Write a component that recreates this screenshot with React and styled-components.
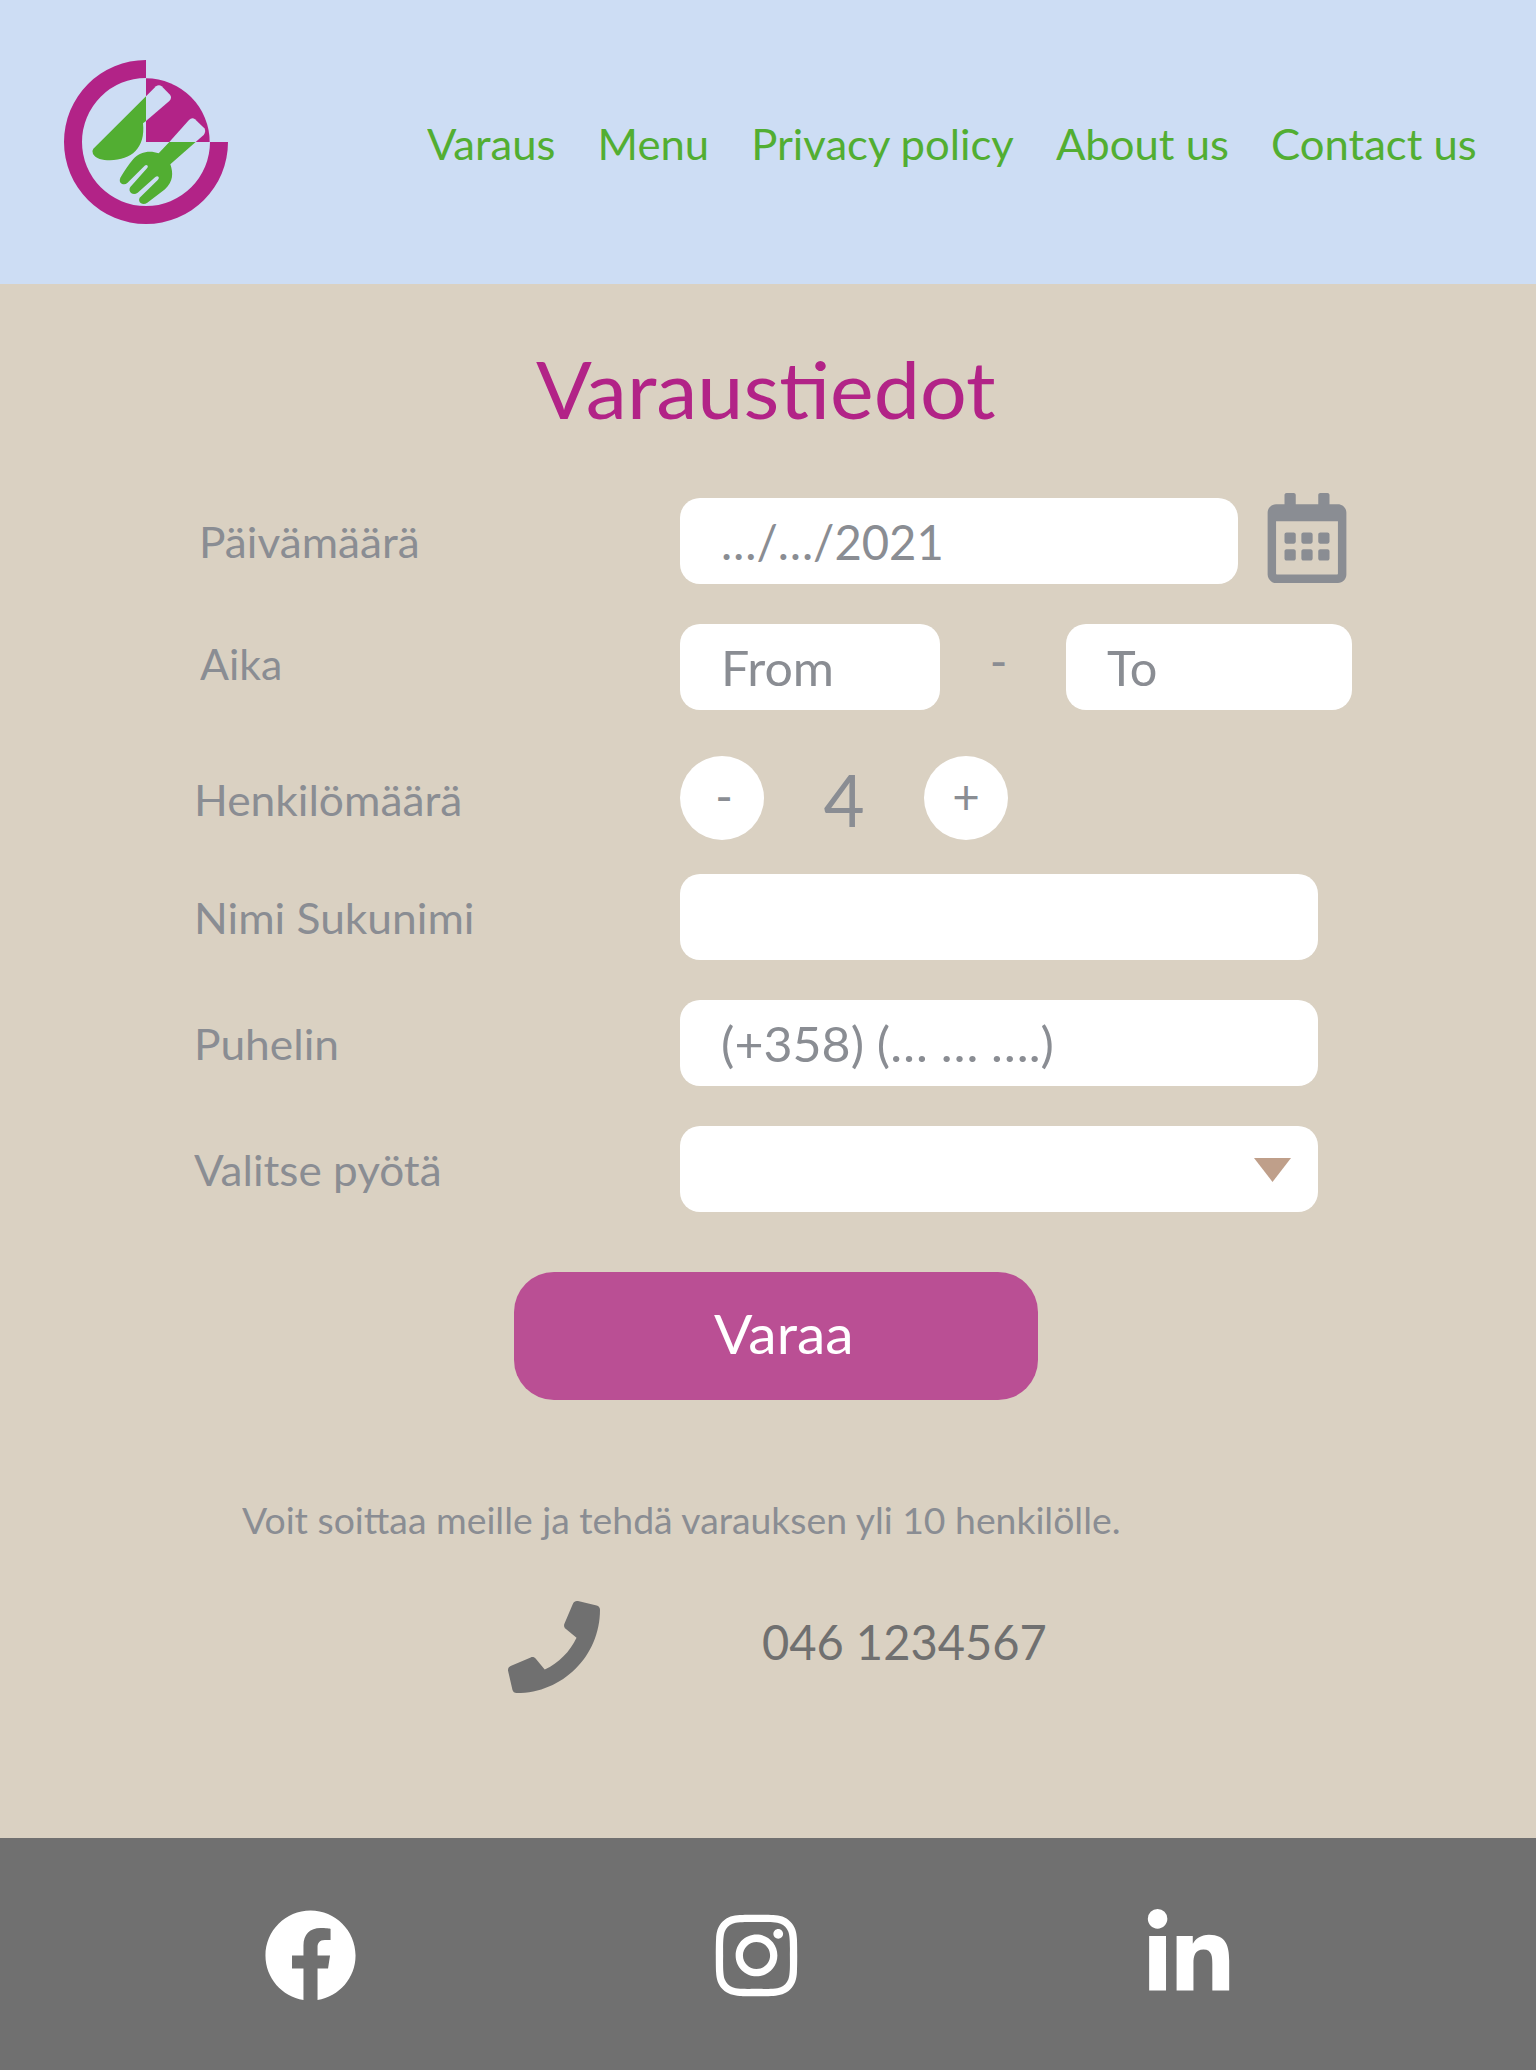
import React from "react";
import styled, { createGlobalStyle } from "styled-components";
import { FaRegCalendarAlt, FaPhone, FaFacebook, FaInstagram, FaLinkedinIn } from "react-icons/fa";

const c = {
  sky: "#cdddf4",
  sand: "#dad1c2",
  green: "#52ae32",
  magenta: "#b22387",
  button: "#ba4f94",
  grey: "#8a8d93",
  dark: "#707070",
  arrow: "#bf9f8a",
};

const GlobalStyle = createGlobalStyle`
  * { box-sizing: border-box; }
  body { margin: 0; background: ${c.sand}; font-family: Lato, "Open Sans", sans-serif; }
  svg { display: block; flex: none; }
`;

const Page = styled.div`
  width: 1536px;
  height: 2070px;
  display: flex;
  flex-direction: column;
  background: ${c.sand};
`;

/* Slightly widened lettering, anchored at its starting edge. */
const Wide = styled.span`
  display: inline-block;
  white-space: nowrap;
  transform: scaleX(${(p) => p.$by || 1.045});
  transform-origin: ${(p) => (p.$center ? "center" : "left")};
`;

const Header = styled.header`
  height: 284px;
  display: flex;
  align-items: center;
  background: ${c.sky};
  padding-left: 64px;
`;

const Nav = styled.nav`
  display: flex;
  gap: 40.5px;
  margin-left: 199px;
  padding-top: 4px;
  transform: scaleX(1.039);
  transform-origin: left;
`;

const NavLink = styled.a`
  color: ${c.green};
  font-size: 42px;
  line-height: 50px;
  white-space: nowrap;
`;

const Main = styled.main`
  flex: 1;
  display: flex;
  flex-direction: column;
`;

const Title = styled.h1`
  margin: 57px 0 61px 536px;
  color: ${c.magenta};
  font-size: 79.5px;
  font-weight: 400;
  line-height: 96px;
`;

const Form = styled.form`
  display: flex;
  flex-direction: column;
  gap: 40px;
`;

const Row = styled.div`
  display: flex;
  align-items: center;
  height: 86px;
`;

const CounterRow = styled(Row)`
  height: 84px;
  margin: 6px 0 -6px;
`;

const Label = styled.label`
  width: 680px;
  padding: ${(p) => p.$pad || "1px 0 0"};
  padding-left: ${(p) => p.$indent || 194}px;
  color: ${c.grey};
  font-size: 42px;
  line-height: 50px;
`;

const Field = styled.div`
  display: flex;
  align-items: center;
  justify-content: ${(p) => (p.$select ? "flex-end" : "flex-start")};
  width: ${(p) => p.$width}px;
  height: 86px;
  padding: 1px 27px 0 41px;
  border-radius: 20px;
  background: #fff;
  color: ${c.grey};
  font-size: 47.5px;
  line-height: 56px;
`;

const CalendarIcon = styled(FaRegCalendarAlt)`
  margin: -6px 0 0 24px;
  color: ${c.grey};
`;

const Dash = styled.span`
  width: 126px;
  text-align: center;
  padding: 0 9px 12px 0;
  color: ${c.grey};
  font-size: 47.5px;
  line-height: 56px;
`;

const Round = styled.button`
  width: 84px;
  height: 84px;
  padding: 0 0 4px ${(p) => p.$nudge || 0}px;
  border: 0;
  border-radius: 50%;
  background: #fff;
  color: ${c.grey};
  font: 400 47.5px/56px Lato, sans-serif;
`;

const Count = styled.span`
  width: 160px;
  padding-top: 3px;
  text-align: center;
  color: ${c.grey};
  font-size: 71px;
  line-height: 84px;
`;

const Submit = styled.button`
  width: 524px;
  height: 128px;
  margin: 60px 0 0 514px;
  padding: 0 0 6px 16px;
  border: 0;
  border-radius: 40px;
  background: ${c.button};
  color: #fff;
  font: 400 54.5px/64px Lato, sans-serif;
`;

const Note = styled.p`
  margin: 98px 0 0 242px;
  color: ${c.grey};
  font-size: 36px;
  line-height: 44px;
`;

const Call = styled.div`
  display: flex;
  align-items: center;
  gap: 162px;
  margin: 59px 0 0 508px;
  color: ${c.dark};
  font-size: 47.5px;
  line-height: 56px;
`;

const Number = styled.span`
  padding-bottom: 10px;
`;

const Footer = styled.footer`
  display: flex;
  align-items: flex-start;
  height: 232px;
  padding: 71px 0 0 264px;
  background: ${c.dark};
  color: #fff;
`;

const Social = styled.a`
  width: ${(p) => p.$width}px;
`;

function Logo() {
  return (
    <svg width="164" height="164" viewBox="42 45 492 492">
      <path fill={c.magenta} d="M288 45A246 246 0 1 0 534 291H480A192 192 0 1 1 288 99Z" />
      <path fill={c.magenta} d="M288 100A191 191 0 0 1 479 291H288Z" />
      <path fill={c.green} d="M288 154L130 311Q124 319 129 327C137 341 157 346 180 346C244 345 287 310 279 235L288 228Z" />
      <path fill={c.sky} d="M288 154L318 124Q327 117 335 124L360 149Q367 158 358 168L288 228Z" />
      <path fill={c.sky} d="M358 291L417 225Q426 216 435 223L463 250Q469 259 461 270L437 291Z" />
      <path fill={c.green} d="M358 291L326 325C300 315 270 320 250 342C235 360 222 380 211 398Q206 410 215 416Q224 421 232 414L284 362Q289 358 293 362Q295 366 291 370L241 426Q235 436 243 444Q253 451 263 443L316 396Q322 391 326 396Q328 400 324 404L269 458Q264 468 273 475Q282 480 292 473L345 433C370 410 370 385 361 358L437 291Z" />
    </svg>
  );
}

export default function App() {
  return (
    <Page>
      <GlobalStyle />
      <Header>
        <Logo />
        <Nav>
          <NavLink>Varaus</NavLink>
          <NavLink>Menu</NavLink>
          <NavLink>Privacy policy</NavLink>
          <NavLink>About us</NavLink>
          <NavLink>Contact us</NavLink>
        </Nav>
      </Header>
      <Main>
        <Title><Wide $by={1.039}>Varaustiedot</Wide></Title>
        <Form>
          <Row>
            <Label $indent={199}><Wide $by={1.052}>Päivämäärä</Wide></Label>
            <Field $width={558}><Wide $by={0.993}>…/…/2021</Wide></Field>
            <CalendarIcon size={90} />
          </Row>
          <Row>
            <Label $indent={200} $pad="0 0 6px"><Wide $by={1.02}>Aika</Wide></Label>
            <Field $width={260}><Wide $by={1.055}>From</Wide></Field>
            <Dash>-</Dash>
            <Field $width={286}><Wide $by={1.025}>To</Wide></Field>
          </Row>
          <CounterRow>
            <Label $pad="3px 0 0"><Wide $by={1.055}>Henkilömäärä</Wide></Label>
            <Round type="button" $nudge={4}>-</Round>
            <Count>4</Count>
            <Round type="button">+</Round>
          </CounterRow>
          <Row>
            <Label><Wide $by={1.055}>Nimi Sukunimi</Wide></Label>
            <Field $width={638} />
          </Row>
          <Row>
            <Label><Wide $by={1.055}>Puhelin</Wide></Label>
            <Field $width={638}><Wide $by={1.055}>(+358) (… … ….)</Wide></Field>
          </Row>
          <Row>
            <Label><Wide $by={1.05}>Valitse pyötä</Wide></Label>
            <Field $width={638} $select>
              <svg width="37" height="24" viewBox="0 0 37 24">
                <path fill={c.arrow} d="M0 0H37L18.5 24Z" />
              </svg>
            </Field>
          </Row>
        </Form>
        <Submit><Wide $by={1.045} $center>Varaa</Wide></Submit>
        <Note><Wide $by={1.037}>Voit soittaa meille ja tehdä varauksen yli 10 henkilölle.</Wide></Note>
        <Call>
          <FaPhone size={92} />
          <Number><Wide $by={0.99}>046 1234567</Wide></Number>
        </Call>
      </Main>
      <Footer>
        <Social $width={446}><FaFacebook size={93} /></Social>
        <Social $width={432}><FaInstagram size={93} /></Social>
        <Social $width={93}><FaLinkedinIn size={93} /></Social>
      </Footer>
    </Page>
  );
}
